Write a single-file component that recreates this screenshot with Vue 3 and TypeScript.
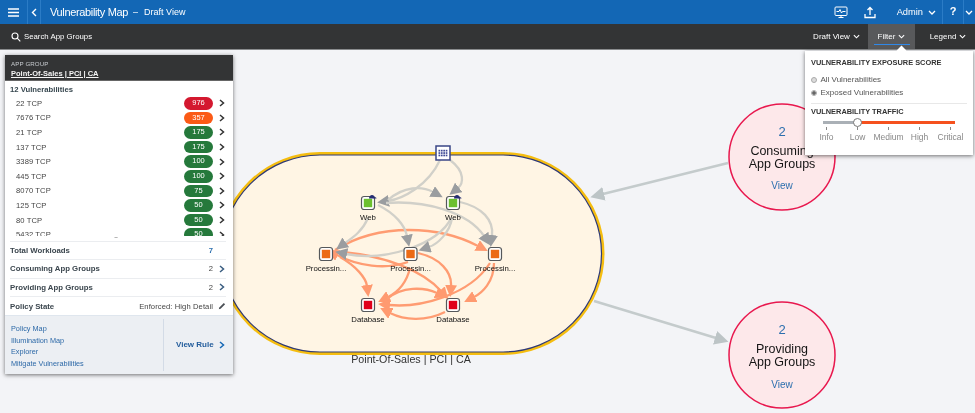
<script setup lang="ts">
interface Vuln { port: string; score: number; tone: string }
const vulns: Vuln[] = [
  { port: '22 TCP', score: 976, tone: 'red' },
  { port: '7676 TCP', score: 357, tone: 'orange' },
  { port: '21 TCP', score: 175, tone: 'green' },
  { port: '137 TCP', score: 175, tone: 'green' },
  { port: '3389 TCP', score: 100, tone: 'green' },
  { port: '445 TCP', score: 100, tone: 'green' },
  { port: '8070 TCP', score: 75, tone: 'green' },
  { port: '125 TCP', score: 50, tone: 'green' },
  { port: '80 TCP', score: 50, tone: 'green' },
  { port: '5432 TCP', score: 50, tone: 'green' },
]
const links = ['Policy Map', 'Illumination Map', 'Explorer', 'Mitigate Vulnerabilities']
const levels = ['Info', 'Low', 'Medium', 'High', 'Critical']
const greyEdges = [
  'M440 160C428 186 402 199 388 201',
  'M450 160C466 172 463 184 458 188',
  'M388 200C404 186 422 186 433 192',
  'M386 203C425 200 468 212 484 236',
  'M460 202C482 207 494 220 492 236',
  'M378 205C396 214 405 226 407 236',
  'M368 218C362 232 352 238 345 243',
  'M451 218C440 244 385 262 346 254',
  'M452 218C450 232 438 244 429 247',
]
const orangeEdges = [
  'M335 250C380 222 440 226 478 246',
  'M408 262C385 270 358 266 337 255',
  'M340 257C356 266 366 278 367 286',
  'M336 252C385 254 424 272 441 291',
  'M410 268C406 285 396 293 388 297',
  'M418 253C440 258 452 272 451 286',
  'M490 263C470 295 420 308 389 305',
  'M494 263C494 282 482 293 474 297',
  'M387 299C402 286 424 287 437 293',
  'M445 312C425 322 404 320 390 313',
]
const nodes = [
  { x: 368, y: 203, fill: '#6cc02f', label: 'Web', cloud: true },
  { x: 453, y: 203, fill: '#6cc02f', label: 'Web', cloud: true },
  { x: 326, y: 254, fill: '#ec6a15', label: 'Processin...', cloud: false },
  { x: 410.5, y: 254, fill: '#ec6a15', label: 'Processin...', cloud: false },
  { x: 495, y: 254, fill: '#ec6a15', label: 'Processin...', cloud: false },
  { x: 368, y: 305, fill: '#e0001b', label: 'Database', cloud: false },
  { x: 453, y: 305, fill: '#e0001b', label: 'Database', cloud: false },
]
const gridCells = [0, 1, 2, 3, 4, 5, 6, 7, 8, 9, 10, 11]
</script>

<template>
  <div class="app">
    <header class="topbar">
      <button class="tb-btn menu" aria-label="Menu">
        <svg width="11" height="9" viewBox="0 0 11 9"><path d="M0 1h11M0 4.500h11M0 8h11" stroke="#fff" stroke-width="1.500" /></svg>
      </button>
      <button class="tb-btn back" aria-label="Back">
        <svg width="6" height="9" viewBox="0 0 6 9"><path d="M5 1 1.500 4.500 5 8" fill="none" stroke="#fff" stroke-width="1.400" /></svg>
      </button>
      <span class="title">Vulnerability Map</span>
      <span class="dash">–</span>
      <span class="subtitle">Draft View</span>
      <div class="spacer"></div>
      <svg class="ic-monitor" width="14" height="13" viewBox="0 0 14 13" fill="none" stroke="#fff" stroke-width="1">
        <rect x="1" y="1" width="12" height="8.500" rx="1" />
        <path d="M2.500 5.500h2.500l1-2 1.500 3.500 1-1.500h3M4.500 11.500h5M7 9.500v2" />
      </svg>
      <svg class="ic-upload" width="12" height="13" viewBox="0 0 12 13" fill="none" stroke="#fff" stroke-width="1.300">
        <path d="M6 9V1.500M3.500 4 6 1.500 8.500 4M1 8v3.500h10V8" />
      </svg>
      <span class="admin">Admin</span>
      <svg class="chev admin-chev" width="8" height="5" viewBox="0 0 8 5"><path d="M1 1l3 3 3-3" /></svg>
      <span class="help">?</span>
      <svg class="chev help-chev" width="8" height="5" viewBox="0 0 8 5"><path d="M1 1l3 3 3-3" /></svg>
    </header>

    <nav class="toolbar">
      <svg class="ic-search" width="10" height="10" viewBox="0 0 10 10" fill="none" stroke="#fff" stroke-width="1.100">
        <circle cx="4" cy="4" r="3" /><path d="M6.200 6.200 9.300 9.300" />
      </svg>
      <span class="search">Search App Groups</span>
      <div class="spacer"></div>
      <div class="tab draft">Draft View<svg class="chev" width="7" height="5" viewBox="0 0 8 5"><path d="M1 1l3 3 3-3" /></svg></div>
      <div class="tab filter">Filter<svg class="chev" width="7" height="5" viewBox="0 0 8 5"><path d="M1 1l3 3 3-3" /></svg><i class="underline"></i></div>
      <div class="tab legend">Legend<svg class="chev" width="7" height="5" viewBox="0 0 8 5"><path d="M1 1l3 3 3-3" /></svg></div>
    </nav>

    <main class="canvas">
      <svg class="graph" width="975" height="363" viewBox="0 50 975 363">
        <defs>
          <marker id="ag" markerUnits="userSpaceOnUse" markerWidth="13" markerHeight="12" refX="1" refY="6" orient="auto">
            <path d="M0 0 12 6 0 12z" fill="#9a9da0" />
          </marker>
          <marker id="ao" markerUnits="userSpaceOnUse" markerWidth="13" markerHeight="12" refX="1" refY="6" orient="auto">
            <path d="M0 0 12 6 0 12z" fill="#ff9a70" />
          </marker>
          <marker id="al" markerUnits="userSpaceOnUse" markerWidth="15" markerHeight="14" refX="1" refY="7" orient="auto">
            <path d="M0 0 14 7 0 14z" fill="#bcc4c6" />
          </marker>
        </defs>

        <line x1="728" y1="163" x2="603" y2="194" stroke="#c4cbcc" stroke-width="2.500" marker-end="url(#al)" />
        <line x1="594" y1="301" x2="716" y2="338" stroke="#c4cbcc" stroke-width="2.500" marker-end="url(#al)" />

        <rect x="220" y="153.500" width="383" height="200" rx="100" fill="#fff5e4" stroke="#f5bd10" stroke-width="3" />
        <rect x="221.500" y="155" width="380" height="197" rx="98.500" fill="none" stroke="#2f3a78" stroke-width="1.200" />
        <text x="411" y="363" class="group-label" text-anchor="middle">Point-Of-Sales | PCI | CA</text>

        <path v-for="d in orangeEdges" :key="d" :d="d" fill="none" stroke="#ff9c72" stroke-width="2.300" marker-end="url(#ao)" />
        <path v-for="d in greyEdges" :key="d" :d="d" fill="none" stroke="#d1d0c9" stroke-width="2.300" marker-end="url(#ag)" />

        <g transform="translate(436 146)">
          <rect width="14" height="14" fill="#fff" stroke="#3a4587" stroke-width="1.500" />
          <rect
            v-for="c in gridCells"
            :key="c"
            :x="2.500 + (c % 4) * 2.400"
            :y="3.800 + Math.floor(c / 4) * 2.400"
            width="1.700"
            height="1.700"
            fill="#3f4a96"
          />
        </g>

        <g v-for="n in nodes" :key="n.x + '-' + n.y" :transform="`translate(${n.x} ${n.y})`">
          <rect x="-6.500" y="-6.500" width="13" height="13" rx="2.500" fill="#fff" stroke="#55585b" stroke-width="1.200" />
          <rect x="-4.200" y="-4.200" width="8.400" height="8.400" :fill="n.fill" />
          <path v-if="n.cloud" d="M1-4.500c0-2 1.500-3.500 3-3.500s2.500 1 2.800 2.200c1 0 1.700.5 1.700 1.300z" fill="#272f73" />
          <text y="16.500" text-anchor="middle" class="node-label">{{ n.label }}</text>
        </g>

        <g>
          <circle cx="782" cy="157" r="53" fill="#fde8ea" stroke="#e8184e" stroke-width="1.500" />
          <text x="782" y="136" text-anchor="middle" class="c-num">2</text>
          <text x="782" y="155" text-anchor="middle" class="c-label">Consuming</text>
          <text x="782" y="168" text-anchor="middle" class="c-label">App Groups</text>
          <text x="782" y="189" text-anchor="middle" class="c-view">View</text>
        </g>
        <g>
          <circle cx="782" cy="355" r="53" fill="#fde8ea" stroke="#e8184e" stroke-width="1.500" />
          <text x="782" y="334" text-anchor="middle" class="c-num">2</text>
          <text x="782" y="353" text-anchor="middle" class="c-label">Providing</text>
          <text x="782" y="366" text-anchor="middle" class="c-label">App Groups</text>
          <text x="782" y="388" text-anchor="middle" class="c-view">View</text>
        </g>
      </svg>

      <aside class="pane">
        <div class="pane-head">
          <div class="eyebrow">APP GROUP</div>
          <div class="group-name">Point-Of-Sales | PCI | CA</div>
        </div>
        <div class="vuln-title">12 Vulnerabilities</div>
        <ul class="vuln-list">
          <li v-for="v in vulns" :key="v.port" class="vuln-row">
            <span class="port">{{ v.port }}</span>
            <span class="pill" :class="v.tone">{{ v.score }}</span>
            <svg class="arrow" width="6" height="8" viewBox="0 0 6 8"><path d="M1 1l3.500 3L1 7" fill="none" stroke="#333" stroke-width="1.500" /></svg>
          </li>
        </ul>
        <div class="grip">•••</div>
        <div class="stat first"><b>Total Workloads</b><span class="val blue">7</span><span class="arrow-gap"></span></div>
        <div class="stat"><b>Consuming App Groups</b><span class="val">2</span>
          <svg class="arrow" width="6" height="8" viewBox="0 0 6 8"><path d="M1 1l3.500 3L1 7" fill="none" stroke="#3a5d80" stroke-width="1.500" /></svg>
        </div>
        <div class="stat"><b>Providing App Groups</b><span class="val">2</span>
          <svg class="arrow" width="6" height="8" viewBox="0 0 6 8"><path d="M1 1l3.500 3L1 7" fill="none" stroke="#3a5d80" stroke-width="1.500" /></svg>
        </div>
        <div class="stat"><b>Policy State</b><span class="val detail">Enforced: High Detail</span>
          <svg class="arrow pencil" width="8" height="8" viewBox="0 0 8 8"><path d="M.8 7.200 1.300 5.400 5.800.900 7.100 2.200 2.600 6.700z" fill="#4a4f55" /></svg>
        </div>
        <div class="pane-foot">
          <div class="foot-links"><a v-for="l in links" :key="l">{{ l }}</a></div>
          <div class="foot-cta">View Rule
            <svg width="6" height="8" viewBox="0 0 6 8"><path d="M1 1l3.500 3L1 7" fill="none" stroke="#1668b5" stroke-width="1.500" /></svg>
          </div>
        </div>
      </aside>

      <section class="popover">
        <i class="notch"></i>
        <h4>VULNERABILITY EXPOSURE SCORE</h4>
        <label class="radio"><i class="dot"></i>All Vulnerabilities</label>
        <label class="radio"><i class="dot on"></i>Exposed Vulnerabilities</label>
        <hr />
        <h4>VULNERABILITY TRAFFIC</h4>
        <div class="slider"><i class="seg grey"></i><i class="seg hot"></i><i class="thumb"></i></div>
        <div class="levels">
          <div v-for="l in levels" :key="l" class="level"><i></i>{{ l }}</div>
        </div>
      </section>
    </main>
  </div>
</template>

<style>
html, body { margin: 0; padding: 0; overflow: hidden; }
</style>

<style scoped>
.app { width: 975px; height: 413px; display: flex; flex-direction: column; overflow: hidden; font-family: "Liberation Sans", Arial, sans-serif; filter: blur(0.35px); }
.topbar { height: 24px; background: #1367b5; color: #fff; display: flex; align-items: center; flex: none; }
.tb-btn { border: 0; background: none; padding: 0; display: flex; align-items: center; justify-content: center; height: 24px; }
.menu { width: 28px; border-right: 1px solid #2b7cc6; }
.back { width: 13px; border-right: 1px solid #2b7cc6; }
.title { font-size: 11px; margin-left: 9px; letter-spacing: -.35px; }
.dash { font-size: 9px; margin-left: 5px; }
.subtitle { font-size: 9px; margin-left: 6px; }
.spacer { flex: 1; }
.ic-monitor { margin-right: 16px; }
.ic-upload { margin-right: 21px; }
.admin { font-size: 9.300px; }
.chev { fill: none; stroke: #fff; stroke-width: 1.300; flex: none; }
.admin-chev { margin-left: 5px; margin-right: 6px; }
.help { width: 22px; height: 24px; line-height: 23px; text-align: center; font-weight: bold; font-size: 11px; border-left: 1px solid #2b7cc6; border-right: 1px solid #2b7cc6; box-sizing: border-box; }
.help-chev { margin: 0 2px 0 1px; }

.toolbar { height: 26px; background: #333435; color: #fff; display: flex; align-items: stretch; flex: none; border-bottom: 1px solid #8a8c8e; box-sizing: border-box; position: relative; z-index: 2; }
.ic-search { align-self: center; margin-left: 11px; }
.search { align-self: center; font-size: 7.800px; margin-left: 3px; }
.tab { font-size: 8px; display: flex; align-items: center; justify-content: center; gap: 3px; position: relative; box-sizing: border-box; white-space: nowrap; }
.draft { width: 55px; padding-right: 8px; }
.filter { width: 47px; background: #58595b; }
.legend { width: 60px; padding-left: 6px; }
.underline { position: absolute; left: 6px; right: 5px; bottom: 4px; height: 1.500px; background: #2f88e8; }

.canvas { flex: 1; position: relative; background: #f3f4f7; }
.graph { position: absolute; left: 0; top: 0; display: block; }
.group-label { font-size: 10.700px; fill: #333; }
.node-label { font-size: 7.800px; fill: #111; }
.c-num { font-size: 13px; fill: #2c6fae; }
.c-label { font-size: 12.500px; fill: #151515; }
.c-view { font-size: 10px; fill: #2c6fae; }

.pane { position: absolute; left: 5px; top: 5px; width: 228px; height: 319px; background: #fff; box-shadow: 0 1px 4px rgba(0, 0, 0, .55); display: flex; flex-direction: column; }
.pane-head { height: 26px; background: #333435; color: #fff; padding: 4px 0 0 6px; box-sizing: border-box; flex: none; border-bottom: 1px solid #666; }
.eyebrow { font-size: 6.200px; color: #c7cbcf; line-height: 9px; letter-spacing: .1px; }
.group-name { font-size: 7.500px; font-weight: bold; line-height: 11px; text-decoration: underline; color: #f5f5f5; }
.vuln-title { font-size: 7.700px; font-weight: bold; color: #37474f; margin: 4px 0 0 5px; line-height: 10px; }
.vuln-list { list-style: none; margin: 1px 0 0; padding: 0; height: 139.500px; overflow: hidden; flex: none; }
.vuln-row { height: 14.600px; display: flex; align-items: center; padding-left: 11px; }
.port { font-size: 7.600px; color: #444; flex: 1; letter-spacing: .1px; }
.pill { width: 29px; height: 12.500px; border-radius: 7px; color: #fff; font-size: 7.500px; line-height: 12.500px; text-align: center; }
.red { background: #d4182f; }
.orange { background: #fb5a16; }
.green { background: #25793b; }
.arrow { margin: 0 8px 0 6px; flex: none; }
.grip { height: 5px; font-size: 3px; line-height: 5px; text-align: center; color: #666; flex: none; box-sizing: border-box; padding-right: 6px; }
.stat { height: 18.600px; margin: 0 7px 0 5px; border-top: 1px solid #ebedf0; display: flex; align-items: center; box-sizing: border-box; flex: none; }
.stat b { flex: 1; font-size: 7.800px; color: #3b464e; }
.val { font-size: 7.600px; color: #444; }
.val.blue { color: #2c6fae; font-weight: bold; }
.val.detail { letter-spacing: .1px; }
.stat .arrow { margin: 0 1px 0 6px; }
.stat .pencil { margin: 0 0 0 5px; }
.stat .arrow-gap { width: 13px; }
.pane-foot { flex: 1; background: #eceff3; border-top: 1px solid #dfe6ee; display: flex; align-items: center; box-sizing: border-box; }
.foot-links { width: 159px; height: 52px; border-right: 1px solid #d3dbe6; display: flex; flex-direction: column; justify-content: space-between; padding: 5px 0 2px 6px; box-sizing: border-box; }
.foot-links a { font-size: 7.300px; color: #2e6aa8; line-height: 10px; }
.foot-cta { flex: 1; font-size: 8px; font-weight: bold; color: #235d9c; padding-left: 12px; display: flex; align-items: center; gap: 5px; }

.popover { position: absolute; left: 805px; top: 1px; width: 168px; height: 104px; background: #fff; box-shadow: 0 1px 4px rgba(0, 0, 0, .55); box-sizing: border-box; padding: 7px 6px 0; z-index: 3; }
.notch { position: absolute; left: 93px; top: -4px; width: 7px; height: 7px; background: #fff; transform: rotate(45deg); }
h4 { margin: 0; font-size: 7.400px; line-height: 10px; color: #333; font-weight: bold; position: relative; }
.radio { display: flex; align-items: center; font-size: 8px; color: #555; height: 13px; gap: 3.500px; }
h4 + .radio { margin-top: 5px; }
.dot { width: 6px; height: 6px; border-radius: 50%; background: #dcdcdc; border: .5px solid #aaa; box-sizing: border-box; }
.dot.on { background: radial-gradient(circle, #666 0 1.500px, #ddd 2px); }
hr { border: 0; border-top: 1px solid #e8e8e8; margin: 4px 0 3px; }
.slider { position: relative; height: 9px; margin-top: 1px; }
.seg { position: absolute; top: 3px; height: 2.500px; }
.seg.grey { left: 12px; width: 34px; background: #aab0b6; }
.seg.hot { left: 50px; width: 94px; background: #f5511e; }
.thumb { position: absolute; left: 41.500px; top: -.500px; width: 9px; height: 9px; border-radius: 50%; background: #fff; border: 1px solid #777; box-sizing: border-box; }
.levels { display: flex; }
.level { width: 31px; text-align: center; font-size: 8.500px; color: #888; white-space: nowrap; }
.level i { display: block; width: 1px; height: 3px; background: #888; margin: 0 auto 2px; }
</style>
